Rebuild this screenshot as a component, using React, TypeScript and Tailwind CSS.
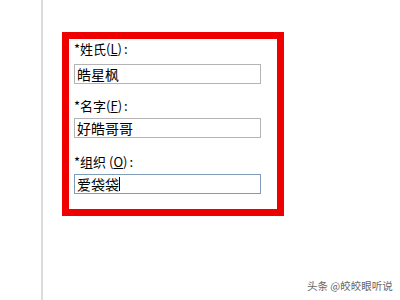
export default function App() {
  const font = { fontFamily: '"Noto Sans CJK SC", "Liberation Sans", sans-serif' }
  return (
    <div className="relative w-[400px] h-[300px] bg-white flex overflow-hidden" style={font}>
      <div className="w-[41px] shrink-0" />
      <div className="w-[2px] h-full bg-[#dcdcdc] shrink-0" />
      <div className="ml-[19px] mt-[32px] w-[222px] h-[184px] border-[7px] border-[#ee0000] box-border px-[5px] flex flex-col">
        <div className="mt-[2px] h-[16px] leading-[16px] text-[13px] text-black">
          *姓氏(<span className="underline">L</span>)<span className="ml-[2px]">:</span>
        </div>
        <div className="mt-[7px] w-[187px] h-[20px] border border-[#b4b4b4] text-[14px] leading-[18px] pl-[2px] text-black">
          皓星枫
        </div>
        <div className="mt-[14px] h-[16px] leading-[16px] text-[13px] text-black">
          *名字(<span className="underline">F</span>)<span className="ml-[2px]">:</span>
        </div>
        <div className="mt-[4px] w-[187px] h-[20px] border border-[#b4b4b4] text-[14px] leading-[18px] pl-[2px] text-black">
          好皓哥哥
        </div>
        <div className="mt-[16px] h-[16px] leading-[16px] text-[13px] text-black">
          *组织 (<span className="underline">O</span>)<span className="ml-[2px]">:</span>
        </div>
        <div className="mt-[4px] w-[187px] h-[20px] border border-[#7f9db9] text-[14px] leading-[18px] pl-[2px] text-black flex items-center">
          <span>爱袋袋</span>
          <span className="w-px h-[14px] bg-black" />
        </div>
      </div>
      <div className="absolute left-[307px] top-[278px] text-[10.5px] leading-[16px] text-[#666]">
        头条 @皎皎眼听说
      </div>
    </div>
  )
}
